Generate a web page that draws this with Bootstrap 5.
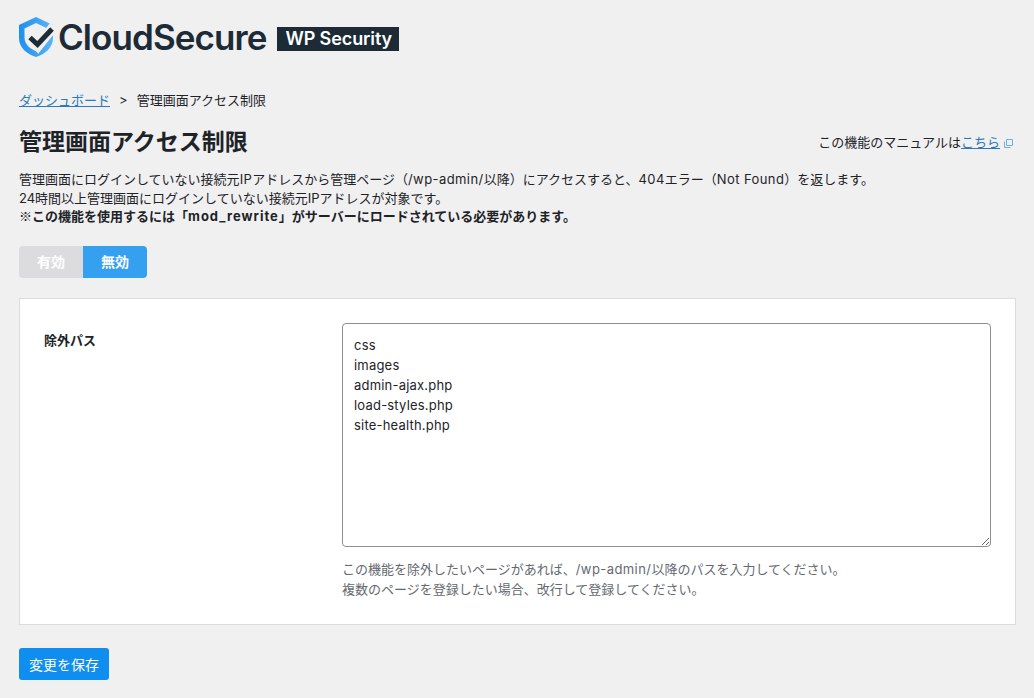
<!DOCTYPE html>
<html lang="ja">
<head>
<meta charset="utf-8">
<title>管理画面アクセス制限</title>
<link href="https://cdn.jsdelivr.net/npm/bootstrap@5.3.0/dist/css/bootstrap.min.css" rel="stylesheet">
<style>
html,body{height:100%}
body{background:#f0f0f1;color:#1d2327;font-family:Inter,"Noto Sans CJK JP",sans-serif;font-size:13px;line-height:19px;padding:0 18px 0 19px;overflow:hidden}
.brand-row{height:40px;margin-top:17px}
.brand-name{font-family:Inter,"Liberation Sans",sans-serif;font-weight:600;font-size:35px;letter-spacing:-.93px;line-height:40px;color:#1d2b36;margin:0 11px 0 0}
.brand-tag{font-family:Inter,"Liberation Sans",sans-serif;font-weight:600;font-size:18px;line-height:24px;height:24px;background:#1d2b36;color:#fff;padding:0 8px;margin-top:10px;width:122px;white-space:nowrap;letter-spacing:-.1px}
.crumbs{margin-top:33px;height:20px;line-height:20px}
.crumbs a,.manual a{color:#2c7ab8}
.crumbs .sep{margin:0 9px}
.head-row{margin-top:16px;height:32px}
.page-title{font-size:23px;font-weight:700;line-height:32px;margin:0}
.manual{margin-top:1px;margin-right:3px}
.ext-ico{margin-left:4px;vertical-align:-1px}
.intro{margin:12px 0 0;line-height:18.500px;height:57px}
.lt{letter-spacing:.42px}
.lt-b{letter-spacing:1px}
.cjk{font-family:"Noto Sans CJK JP",sans-serif;line-height:0}
.switcher{margin-top:19px;height:32px}
.sw-btn{border:0;font-size:14px;font-weight:700;color:#fff;height:32px;line-height:30px;padding:0;width:64px}
.sw-on{background:#dcdcde;border-radius:4px 0 0 4px}
.sw-off{background:#36a0f0;border-radius:0 4px 4px 0}
.panel{margin-top:20px;background:#fff;border:1px solid #dcdcde;height:327px;padding:24px}
.field-label{width:298px;flex:none;font-weight:700;padding-top:8px}
.field-body{flex:1 1 auto;min-width:0}
.path-area{display:block;width:100%;height:224px;border:1px solid #8c8f94;border-radius:4px;padding:11px;font:inherit;line-height:20px;letter-spacing:.2px;color:#1d2327;background:#fff}
.hint{color:#646970;margin:12px 0 0;line-height:20px}
.save-btn{margin-top:23px;background:#0f8eef;border:0;border-radius:3px;color:#fff;font-size:14px;height:32px;width:90px;padding:0}
</style>
</head>
<body>
<div class="brand-row d-flex align-items-start">
  <svg width="39" height="42" viewBox="0 0 39 42" aria-hidden="true">
    <defs><linearGradient id="shieldFill" x1="0" y1="0" x2="1" y2="0"><stop offset="0" stop-color="#1f8fee"/><stop offset="1" stop-color="#5db4f6"/></linearGradient></defs>
    <path d="M17 0 L34 8 V21 C34 31 26 37 17 40 C8 37 0 31 0 21 V8 Z" fill="url(#shieldFill)"/>
    <path d="M17 6 L28.500 11.500 V20.500 C28.500 27.500 22.500 32 17 34 C11.500 32 5.500 27.500 5.500 20.500 V11.500 Z" fill="#f0f0f1"/>
    <path d="M11 20 L19 29 L35 9" fill="none" stroke="#f0f0f1" stroke-width="10"/>
    <path d="M11 20.500 L18.500 27.500 L33 12" fill="none" stroke="#1d2b36" stroke-width="5"/>
  </svg>
  <span class="brand-name">CloudSecure</span>
  <span class="brand-tag">WP Security</span>
</div>
<div class="crumbs"><a href="#">ダッシュボード</a><span class="sep">&gt;</span>管理画面アクセス制限</div>
<div class="head-row d-flex justify-content-between align-items-center">
  <h1 class="page-title">管理画面アクセス制限</h1>
  <div class="manual">この機能のマニュアルは<a href="#">こちら</a><svg class="ext-ico" width="9" height="9" viewBox="0 0 9 9" aria-hidden="true"><path d="M2.500 .5h6v6h-6zM.5 2.500v6h6" fill="none" stroke="#72aee6" stroke-width="1"/></svg></div>
</div>
<p class="intro">管理画面にログインしていない接続元<span class="lt">IP</span>アドレスから管理ページ（<span class="lt">/wp-admin/</span>以降）にアクセスすると、<span class="lt">404</span>エラー（<span class="lt">Not Found</span>）を返します。<br>24時間以上管理画面にログインしていない接続元IPアドレスが対象です。<br><strong><span class="cjk">※</span>この機能を使用するには「<span class="lt-b">mod_rewrite</span>」がサーバーにロードされている必要があります。</strong></p>
<div class="switcher d-flex">
  <button type="button" class="sw-btn sw-on">有効</button>
  <button type="button" class="sw-btn sw-off">無効</button>
</div>
<div class="panel d-flex">
  <div class="field-label">除外パス</div>
  <div class="field-body">
    <textarea class="path-area">css
images
admin-ajax.php
load-styles.php
site-health.php</textarea>
    <p class="hint">この機能を除外したいページがあれば、<span class="lt">/wp-admin/</span>以降のパスを入力してください。<br>複数のページを登録したい場合、改行して登録してください。</p>
  </div>
</div>
<button type="button" class="save-btn d-block">変更を保存</button>
</body>
</html>
